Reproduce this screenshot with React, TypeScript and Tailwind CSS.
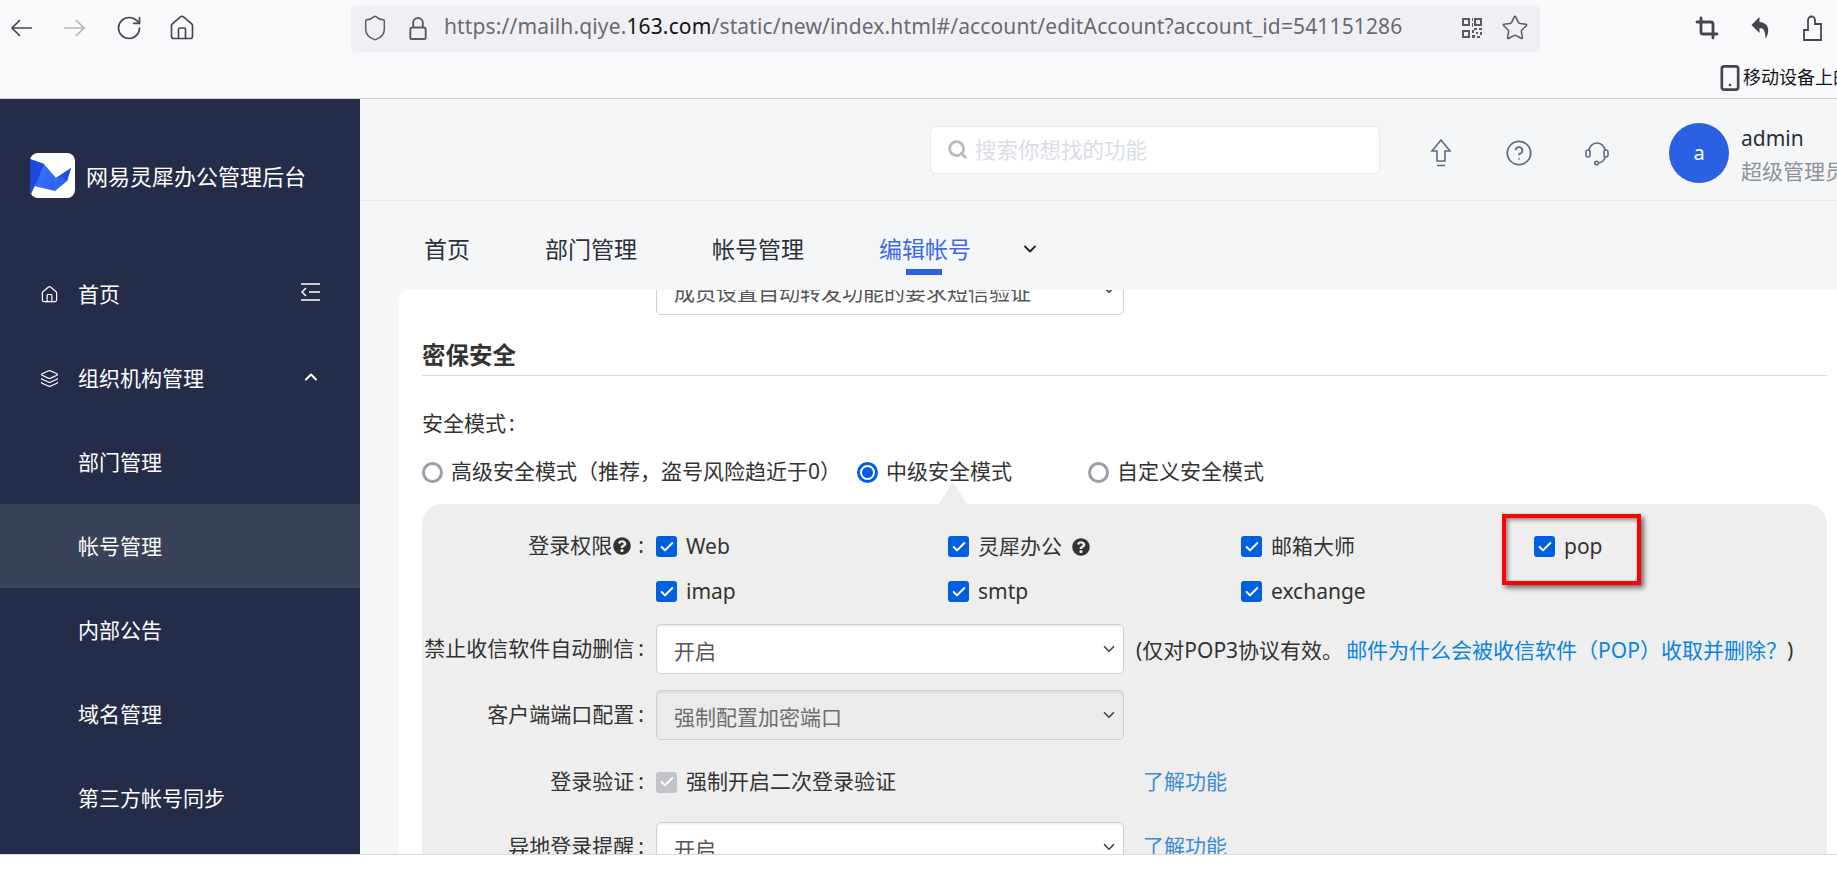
import React from 'react';
import { RotateCw, House, Shield, Star, Crop, Search, CircleHelp, ChevronDown, ChevronUp, Layers, Check, Smartphone } from 'lucide-react';
import { FaQuestionCircle } from 'react-icons/fa';

const FONT = 'font-["Noto_Sans","Noto_Sans_CJK_SC",sans-serif]';

function Logo() {
  return (
    <svg viewBox="0 0 45 45" className="w-[45px] h-[45px] shrink-0">
      <defs>
        <linearGradient id="bird" x1="0" y1="0" x2="1" y2="1">
          <stop offset="0" stopColor="#3f7dff" />
          <stop offset="1" stopColor="#2258ee" />
        </linearGradient>
      </defs>
      <rect width="45" height="45" rx="8" fill="#fff" />
      <path d="M0 6 L14 11 L26 25 L41 15 L37 28 L25 38 L4 33 L1 41 L0 38 Z" fill="url(#bird)" />
      <path d="M14 11 L8 26 L1 41 L0 38 L0 6 Z" fill="#1d48dc" />
      <path d="M26 25 L41 15 L37 28 L33 24 Z" fill="#1f4fd8" />
    </svg>
  );
}

function Arrow({ back, className }: { back?: boolean; className?: string }) {
  return (
    <svg viewBox="0 0 22 18" className={`w-[22px] h-[18px] shrink-0 ${className ?? ''}`} fill="none" stroke="currentColor" strokeWidth="1.7">
      {back ? <path d="M22 9 H2 M10 1 L2 9 L10 17" /> : <path d="M0 9 H20 M12 1 L20 9 L12 17" />}
    </svg>
  );
}

function Toolbar() {
  return (
    <div className="h-[99px] shrink-0 bg-[#f9f9fb] border-b border-[#cfcfd3] overflow-hidden">
      <div className="flex items-center h-[53px] pt-[3px]">
        <div className="flex items-center w-[351px] pl-[10px] text-[#45454d]">
          <Arrow back />
          <Arrow className="ml-[32px] text-[#b4b4ba]" />
          <RotateCw size={28} strokeWidth={1.4} className="ml-[29px]" />
          <House size={28} strokeWidth={1.4} className="ml-[25px]" />
        </div>
        <div className="flex items-center w-[1189px] h-[47px] rounded-[6px] bg-[#f0f0f4] pl-[10px] text-[#5b5b66]">
          <Shield size={28} strokeWidth={1.3} />
          <svg viewBox="0 0 20 26" className="w-[20px] h-[25px] ml-[19px]" fill="none" stroke="currentColor" strokeWidth="2">
            <path d="M5 12 V7 a5 5 0 0 1 10 0 V12" />
            <rect x="2" y="12" width="16" height="12" rx="2" />
          </svg>
          <span className="ml-[16px] -mt-[3px] text-[21px] whitespace-nowrap text-[#6a6a73] tracking-[0.14px]">
            https://mailh.qiye.<span className="text-[#15141a]">163.com</span>/static/new/index.html#/account/editAccount?account_id=541151286
          </span>
          <svg viewBox="0 0 22 22" className="w-[22px] h-[22px] ml-[59px]" fill="#5b5b66">
            <path d="M1 1h8v8H1z M3 3v4h4V3z M13 1h8v8h-8z M15 3v4h4V3z M1 13h8v8H1z M3 15v4h4v-4z" fillRule="evenodd" />
            <path d="M11 1h1v3h-1z M11 6h1v4h-1z M13 11h3v2h-3z M18 11h3v2h-3z M11 13h2v3h-2z M15 15h2v2h-2z M19 15h2v3h-2z M11 18h3v3h-3z M16 19h3v2h-3z" />
          </svg>
          <Star size={28} strokeWidth={1.3} className="ml-[18px]" />
        </div>
        <div className="flex items-center pl-[155px] gap-[31px] text-[#45454d] overflow-hidden">
          <Crop size={24} strokeWidth={2.8} />
          <svg viewBox="0 0 20 26" className="w-[21px] h-[26px] shrink-0" fill="currentColor">
            <path d="M9 2 L1 10 L9 18 V13 C13 13 15 16 15 24 C19 18 20 8 9 7 Z" />
          </svg>
          <svg viewBox="0 0 20 26" className="w-[20px] h-[26px] shrink-0" fill="none" stroke="currentColor" strokeWidth="1.8">
            <path d="M6 9 V5 a3.5 3.5 0 0 1 7 0 V9 h6 V25 H2 V15 h4 Z" />
          </svg>
        </div>
      </div>
      <div className="flex items-center justify-end h-[45px] pt-[4px] text-[18px] text-[#15141a] whitespace-nowrap overflow-hidden">
        <div className="flex items-center w-[116px] shrink-0">
          <Smartphone size={28} strokeWidth={2.3} className="text-[#45454d] shrink-0 -ml-[5px] -mr-[1px]" />
          <span>移动设备上的书签</span>
        </div>
      </div>
    </div>
  );
}

function NavItem({ label, active, icon, right }: { label: string; active?: boolean; icon?: React.ReactNode; right?: React.ReactNode }) {
  return (
    <div className={`relative flex items-center h-[84px] pl-[40px] pr-[40px] text-[21px] text-white ${active ? 'bg-[#384259]' : ''}`}>
      <span className="w-[38px] shrink-0">{icon}</span>
      <span className="flex-1 pt-[2px]">{label}</span>
      {right}
    </div>
  );
}

function Sidebar() {
  return (
    <aside className="w-[360px] shrink-0 bg-[#232d49] overflow-hidden">
      <div className="flex items-center h-[153px] pl-[30px] gap-[11px] text-[22px] text-white whitespace-nowrap">
        <Logo />
        <span className="leading-none">网易灵犀办公管理后台</span>
      </div>
      <NavItem
        label="首页"
        icon={<House size={19} strokeWidth={1.5} />}
        right={
          <svg viewBox="0 0 19 18" className="w-[19px] h-[18px] -mt-[4px]" fill="none" stroke="#fff" strokeWidth="1.5">
            <path d="M0 1h19 M0 17h19 M8 9h11 M5 5 L1 9 L5 13" />
          </svg>
        }
      />
      <NavItem label="组织机构管理" icon={<Layers size={19} strokeWidth={1.5} />} right={<ChevronUp size={20} strokeWidth={2.4} className="-mt-[2px] -mr-[1px]" />} />
      <NavItem label="部门管理" />
      <NavItem label="帐号管理" active />
      <NavItem label="内部公告" />
      <NavItem label="域名管理" />
      <NavItem label="第三方帐号同步" />
    </aside>
  );
}

function Header() {
  return (
    <header className="flex items-center h-[102px] shrink-0 border-b border-[#e8eaee] pl-[570px]">
      <div className="flex items-center w-[450px] shrink-0 h-[48px] rounded-[6px] bg-white border border-[#e6e8ed] pl-[16px] text-[21.5px] text-[#d9dde5]">
        <Search size={21} strokeWidth={3.2} className="text-[#b5b9c1] mr-[7px]" />
        <span className="pt-[2px]">搜索你想找的功能</span>
      </div>
      <div className="flex items-center shrink-0 ml-[47px] gap-[50px] text-[#5f6c86] mt-[6px]">
        <svg viewBox="0 0 24 28" className="w-[28px] h-[28px]" fill="none" stroke="currentColor" strokeWidth="1.6">
          <path d="M12 1 L21 12 H16 V22 H8 V12 H3 Z M8 26.5 H16" />
        </svg>
        <CircleHelp size={28} strokeWidth={1.5} />
        <svg viewBox="0 0 28 28" className="w-[28px] h-[28px]" fill="none" stroke="currentColor" strokeWidth="1.6">
          <path d="M6 12 a8 8 0 0 1 16 0 M22 17 c0 4 -3 7 -7 7" />
          <rect x="3" y="11" width="4" height="7" rx="2" />
          <rect x="21" y="11" width="4" height="7" rx="2" />
          <circle cx="13.5" cy="24" r="1.8" />
        </svg>
      </div>
      <div className="flex items-center justify-center w-[60px] h-[60px] shrink-0 ml-[58px] rounded-full bg-[#2c60e2] text-white text-[20px] mt-[6px]">a</div>
      <div className="ml-[12px] mt-[10px] shrink-0 whitespace-nowrap">
        <div className="text-[21px] leading-[28px] text-[#2b2f38]">admin</div>
        <div className="text-[21px] leading-[28px] mt-[5px] text-[#8d929c]">超级管理员</div>
      </div>
    </header>
  );
}

function Tabs() {
  return (
    <div className="flex items-center h-[89px] shrink-0 pl-[64px] pt-[7px] text-[23px] text-[#2a2f3a]">
      <span>首页</span>
      <span className="ml-[75px]">部门管理</span>
      <span className="ml-[75px]">帐号管理</span>
      <span className="relative ml-[75px] text-[#3c6ae6]">
        编辑帐号
        <span className="absolute left-[27px] top-[37px] w-[36px] h-[6px] bg-[#2c60e2]" />
      </span>
      <ChevronDown size={20} strokeWidth={2.2} className="ml-[49px] text-[#222]" />
    </div>
  );
}

function Box({ disabled }: { disabled?: boolean }) {
  return (
    <span className={`flex items-center justify-center w-[21px] h-[21px] shrink-0 rounded-[3px] ${disabled ? 'bg-[#c3c4c9]' : 'bg-[#0060df]'}`}>
      <Check size={16} strokeWidth={3} className="text-white" />
    </span>
  );
}

function CheckItem({ label, help }: { label: string; help?: boolean }) {
  return (
    <div className="flex items-center h-[45px] gap-[9px]">
      <Box />
      <span>{label}</span>
      {help && <FaQuestionCircle size={18} className="ml-[1px] text-[#333]" />}
    </div>
  );
}

function Radio({ checked, label, className }: { checked?: boolean; label: string; className?: string }) {
  return (
    <div className={`flex items-center gap-[8px] ${className ?? ''}`}>
      {checked ? (
        <span className="w-[21px] h-[21px] rounded-full border-[3px] border-[#0060df] flex items-center justify-center">
          <span className="w-[11px] h-[11px] rounded-full bg-[#0060df]" />
        </span>
      ) : (
        <span className="w-[21px] h-[21px] rounded-full border-[3px] border-[#9d9da8] bg-white" />
      )}
      <span>{label}</span>
    </div>
  );
}

function Select({ value, disabled, className }: { value: string; disabled?: boolean; className?: string }) {
  return (
    <div className={`flex items-center justify-between w-[468px] h-[50px] shrink-0 rounded-[5px] border border-[#cfcfcf] pl-[17px] pr-[5px] shadow-[inset_0_2px_2px_rgba(0,0,0,0.06)] ${disabled ? 'bg-[#ebebeb] text-[#6e6e6e]' : 'bg-white text-[#555]'} ${className ?? ''}`}>
      <span className="text-[21px] pt-[5px]">{value}</span>
      <ChevronDown size={18} strokeWidth={2.2} className="text-[#444] -mt-[1px]" />
    </div>
  );
}

function FormRow({ label, children, className }: { label: string; children: React.ReactNode; className?: string }) {
  return (
    <div className={`flex items-center ${className ?? ''}`}>
      <div className="flex items-center justify-end w-[222px] mr-[12px] shrink-0 whitespace-nowrap">
        {label}
        <span className="ml-[4px]">:</span>
      </div>
      {children}
    </div>
  );
}

function Content() {
  return (
    <section className="flex-1 min-h-0 ml-[39px] bg-white rounded-tl-[10px] overflow-hidden pl-[23px] pr-[10px] text-[21px] text-[#333]">
      <div className="-mt-[25px] ml-[234px]">
        <Select value="成员设置自动转发功能的要求短信验证" />
      </div>
      <h2 className="mt-[23px] h-[38px] leading-[34px] font-bold text-[23.5px] border-b border-[#dcdcdc]">密保安全</h2>
      <div className="mt-[31px] leading-[32px]">
        安全模式<span className="ml-[3px]">:</span>
      </div>
      <div className="flex items-center h-[32px] mt-[17px]">
        <Radio label="高级安全模式（推荐，盗号风险趋近于0）" />
        <Radio checked label="中级安全模式" className="ml-[16px]" />
        <Radio label="自定义安全模式" className="ml-[76px]" />
      </div>
      <div className="relative mt-[16px] bg-[#eeeeee] rounded-t-[20px] pt-[20px] pb-[20px] h-[400px]">
        <span className="absolute left-[517px] -top-[22px] w-0 h-0 border-x-[14px] border-x-transparent border-b-[22px] border-b-[#eeeeee]" />
        <span className="absolute left-[1080px] top-[10px] w-[139px] h-[71px] border-[4px] border-[#ff0000] shadow-[3px_3px_5px_rgba(0,0,0,0.55),inset_2px_2px_4px_rgba(0,0,0,0.45)]" />
        <div className="flex">
          <div className="flex items-start justify-end w-[222px] mr-[12px] shrink-0 h-[45px] pt-[6px]">
            登录权限
            <FaQuestionCircle size={18} className="mt-[7px] ml-[1px] text-[#333]" />
            <span className="ml-[7px]">:</span>
          </div>
          <div className="grid grid-cols-[292px_293px_293px_120px]">
            <CheckItem label="Web" />
            <CheckItem label="灵犀办公" help />
            <CheckItem label="邮箱大师" />
            <CheckItem label="pop" />
            <CheckItem label="imap" />
            <CheckItem label="smtp" />
            <CheckItem label="exchange" />
          </div>
        </div>
        <FormRow label="禁止收信软件自动删信" className="mt-[10px]">
          <Select value="开启" />
          <span className="ml-[12px] pt-[3px] whitespace-nowrap">
            (仅对POP3协议有效。<span className="ml-[3px] text-[#0a84e0]">邮件为什么会被收信软件（POP）收取并删除？</span>)
          </span>
        </FormRow>
        <FormRow label="客户端端口配置" className="mt-[16px]">
          <Select value="强制配置加密端口" disabled />
        </FormRow>
        <FormRow label="登录验证" className="h-[50px] mt-[17px]">
          <Box disabled />
          <span className="ml-[9px] w-[457px]">强制开启二次登录验证</span>
          <span className="text-[#3d8bd4]">了解功能</span>
        </FormRow>
        <FormRow label="异地登录提醒" className="mt-[15px]">
          <Select value="开启" />
          <span className="ml-[19px] text-[#3d8bd4]">了解功能</span>
        </FormRow>
      </div>
    </section>
  );
}

export default function App() {
  return (
    <div className={`flex flex-col w-[1837px] h-screen overflow-hidden bg-white ${FONT}`}>
      <Toolbar />
      <div className="flex h-[755px] shrink-0">
        <Sidebar />
        <main className="flex flex-col flex-1 min-w-0 bg-[#f5f6f8] overflow-hidden">
          <Header />
          <Tabs />
          <Content />
        </main>
      </div>
      <div className="flex-1 border-t border-[#dcdcdc] bg-white" />
    </div>
  );
}
